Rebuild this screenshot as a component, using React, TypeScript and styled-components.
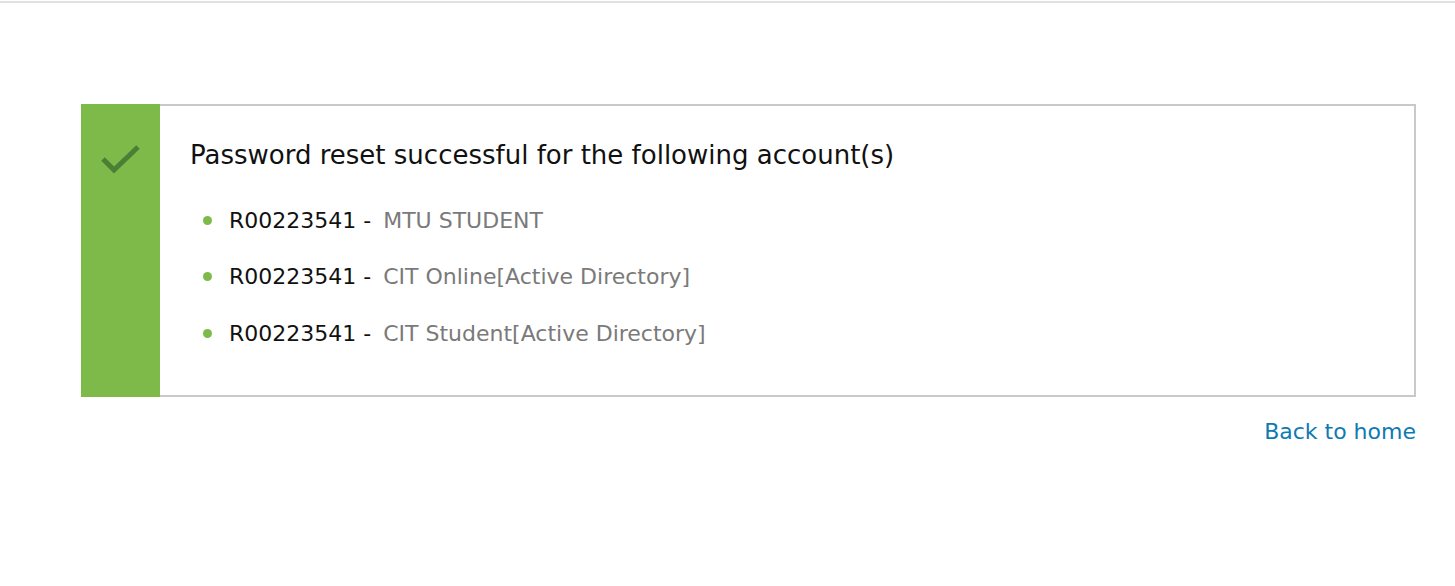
import React from "react";
import styled, { createGlobalStyle } from "styled-components";

const Global = createGlobalStyle`
  html, body { margin: 0; padding: 0; background: #fff; }
  body { font-family: "DejaVu Sans", Verdana, sans-serif; }
`;

const TopRule = styled.div`
  height: 1px;
  border-top: 2px solid #e0e0e0;
  margin-top: 1px;
`;

const Main = styled.main`
  padding: 100px 39px 0 81px;
`;

const Card = styled.section`
  display: flex;
  border: 2px solid #c9c9c9;
  border-left: none;
  min-height: 289px;
`;

const Side = styled.div`
  width: 79px;
  flex: none;
  background: #7dba4a;
  display: flex;
  justify-content: center;
  align-items: flex-start;
  padding-top: 38px;
  margin: -2px 0;
`;

const Body = styled.div`
  flex: 1;
  padding: 33px 30px 20px 30px;
`;

const Title = styled.h1`
  margin: 0 0 21px;
  font-size: 26px;
  font-weight: normal;
  color: #111;
  line-height: 32px;
`;

const List = styled.ul`
  list-style: none;
  margin: 0;
  padding: 0 0 0 13px;
`;

const Item = styled.li`
  display: flex;
  align-items: center;
  height: 56.5px;
  font-size: 22px;
  color: #111;
`;

const Dot = styled.span`
  width: 9px;
  height: 9px;
  border-radius: 50%;
  background: #7dba4a;
  margin-right: 17px;
  flex: none;
`;

const Muted = styled.span`
  color: #7a7a7a;
  white-space: pre;
  margin-left: 12px;
`;

const Footer = styled.div`
  display: flex;
  justify-content: flex-end;
  padding-top: 22px;
`;

const HomeLink = styled.a`
  color: #0e7ab4;
  font-size: 22px;
  text-decoration: none;
`;

const Check = () => (
  <svg width="44" height="34" viewBox="0 0 44 34">
    <path d="M4 17 L15 28 L39 5" fill="none" stroke="#4d7e35" strokeWidth="5" />
  </svg>
);

const accounts = ["MTU STUDENT", "CIT Online[Active Directory]", "CIT Student[Active Directory]"];

export default function App() {
  return (
    <>
      <Global />
      <TopRule />
      <Main>
        <Card>
          <Side>
            <Check />
          </Side>
          <Body>
            <Title>Password reset successful for the following account(s)</Title>
            <List>
              {accounts.map((a) => (
                <Item key={a}>
                  <Dot />
                  R00223541 -<Muted>{a}</Muted>
                </Item>
              ))}
            </List>
          </Body>
        </Card>
        <Footer>
          <HomeLink href="#">Back to home</HomeLink>
        </Footer>
      </Main>
    </>
  );
}
